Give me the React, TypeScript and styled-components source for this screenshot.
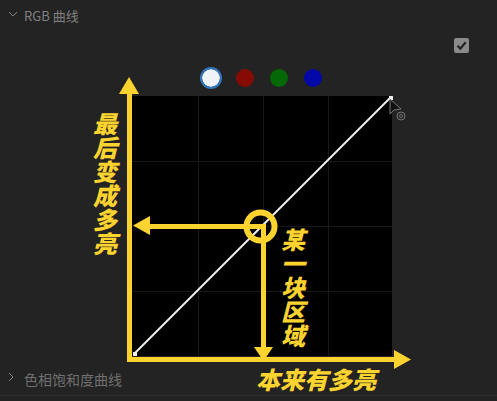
import React, { useState } from 'react';
import styled, { createGlobalStyle } from 'styled-components';

const YELLOW = '#fdd32f';

const GlobalStyle = createGlobalStyle`
  * { box-sizing: border-box; }
  body {
    margin: 0;
    background: #232323;
    font-family: "Noto Sans CJK SC", sans-serif;
  }
`;

const Panel = styled.main`
  display: flex;
  flex-direction: column;
  min-height: 100vh;
  overflow: hidden;
  background: #232323;
`;

const SectionHeader = styled.button<{ $large?: boolean }>`
  display: flex;
  align-items: center;
  gap: 6px;
  width: 100%;
  height: 32px;
  padding: 0 8px;
  border: 0;
  background: none;
  color: ${({ $large }) => ($large ? '#707070' : '#808080')};
  font-family: inherit;
  font-size: ${({ $large }) => ($large ? '14px' : '13px')};
  font-weight: 400;
  line-height: 20px;
  text-align: left;
`;

const Chevron = styled.svg`
  width: 10px;
  height: 10px;
  margin-bottom: 4px;
  fill: none;
  stroke: #858585;
  stroke-width: 1;
`;

const ToggleRow = styled.div`
  display: flex;
  justify-content: flex-end;
  padding: 6px 28px 0 0;
`;

const ToggleLabel = styled.label`
  display: grid;

  & > * { grid-area: 1 / 1; }
`;

const ToggleInput = styled.input`
  appearance: none;
  width: 15px;
  height: 15px;
  margin: 0;
  border-radius: 2px;
  background: #8a8a8a;
`;

const Tick = styled.svg`
  width: 15px;
  height: 15px;
  pointer-events: none;
  fill: none;
  stroke: #232323;
  stroke-width: 2.2;
`;

const CurveArea = styled.div`
  display: flex;
  flex-direction: column;
  align-items: center;
  padding: 14px 0 7px 27px;
`;

const Channels = styled.div`
  display: flex;
  align-items: center;
  gap: 12px;
  margin-bottom: 7px;
`;

const Channel = styled.input<{ $color: string }>`
  appearance: none;
  width: 22px;
  height: 22px;
  margin: 0;
  padding: 2px;
  border-radius: 50%;
  background: ${({ $color }) => $color} content-box;

  &:checked {
    box-shadow: inset 0 0 0 2px #2f78c0;
  }
`;

const Plot = styled.div`
  position: relative;
  width: 260px;
  height: 260px;
  background: #000;
`;

const Drawing = styled.svg`
  display: block;
  width: 260px;
  height: 260px;
  overflow: visible;
`;

const Note = styled.span<{ $left: number; $top: number; $vertical?: boolean }>`
  position: absolute;
  left: ${({ $left }) => $left}px;
  top: ${({ $top }) => $top}px;
  width: ${({ $vertical }) => ($vertical ? '24px' : 'max-content')};
  color: ${YELLOW};
  font-size: 24px;
  font-style: italic;
  font-weight: 900;
  line-height: 24px;
  word-break: break-all;
`;

const Footer = styled.footer`
  border-bottom: 1px solid #303030;
`;

const channels = [
  { name: 'RGB', color: '#eef3f8' },
  { name: '红色', color: '#870b05' },
  { name: '绿色', color: '#046804' },
  { name: '蓝色', color: '#0508a8' },
];

const gridLines = [66, 131, 196];

export default function App() {
  const [channel, setChannel] = useState('RGB');

  return (
    <>
      <GlobalStyle />
      <Panel>
        <SectionHeader type="button" aria-expanded="true">
          <Chevron viewBox="0 0 10 10"><path d="M1 3l4 4 4-4" /></Chevron>
          RGB 曲线
        </SectionHeader>
        <ToggleRow>
          <ToggleLabel>
            <ToggleInput type="checkbox" defaultChecked aria-label="RGB 曲线" />
            <Tick viewBox="0 0 15 15"><path d="M3.5 7.8l2.8 2.8 5.4-6.4" /></Tick>
          </ToggleLabel>
        </ToggleRow>
        <CurveArea>
          <Channels role="radiogroup">
            {channels.map(({ name, color }) => (
              <Channel
                key={name}
                type="radio"
                name="channel"
                aria-label={name}
                $color={color}
                checked={channel === name}
                onChange={() => setChannel(name)}
              />
            ))}
          </Channels>
          <Plot>
            <Drawing viewBox="0 0 260 260">
              <g stroke="#181818" strokeWidth="1">
                {gridLines.map((p) => (
                  <path key={p} d={`M${p + 0.5} 0V260M0 ${p - 0.5}H260`} />
                ))}
              </g>
              <path d="M2 258L258 2" stroke="#f0f0f0" strokeWidth="2" />
              <path d="M1 256h4v4h-4zM257 0h4v4h-4z" fill="#eee" />
              <g stroke={YELLOW} fill="none" strokeWidth="5">
                <path d="M-2.5 -4V263.5H264" />
                <path d="M14 130.5H131.5V254" />
                <circle cx="128.5" cy="130.5" r="14" strokeWidth="6" />
              </g>
              <g fill={YELLOW}>
                <path d="M-3 -19L7 -2H-13z" />
                <path d="M279 263.5L262 254V273z" />
                <path d="M1 129.5L18 120V139z" />
                <path d="M131.5 265L122 251H141z" />
              </g>
              <path d="M258 3v15l4-4 7-1z" fill="#111" stroke="#777" strokeWidth="1" />
              <g fill="none" stroke="#777" strokeWidth="1">
                <circle cx="269" cy="20" r="4" />
                <circle cx="269" cy="20" r="1.5" />
              </g>
            </Drawing>
            <Note $left={-39} $top={15} $vertical>最后变成多亮</Note>
            <Note $left={149} $top={131} $vertical>某一块区域</Note>
            <Note $left={124} $top={271}>本来有多亮</Note>
          </Plot>
        </CurveArea>
        <Footer>
          <SectionHeader type="button" aria-expanded="false" $large>
            <Chevron viewBox="0 0 10 10"><path d="M1 1l4 4-4 4" /></Chevron>
            色相饱和度曲线
          </SectionHeader>
        </Footer>
      </Panel>
    </>
  );
}
